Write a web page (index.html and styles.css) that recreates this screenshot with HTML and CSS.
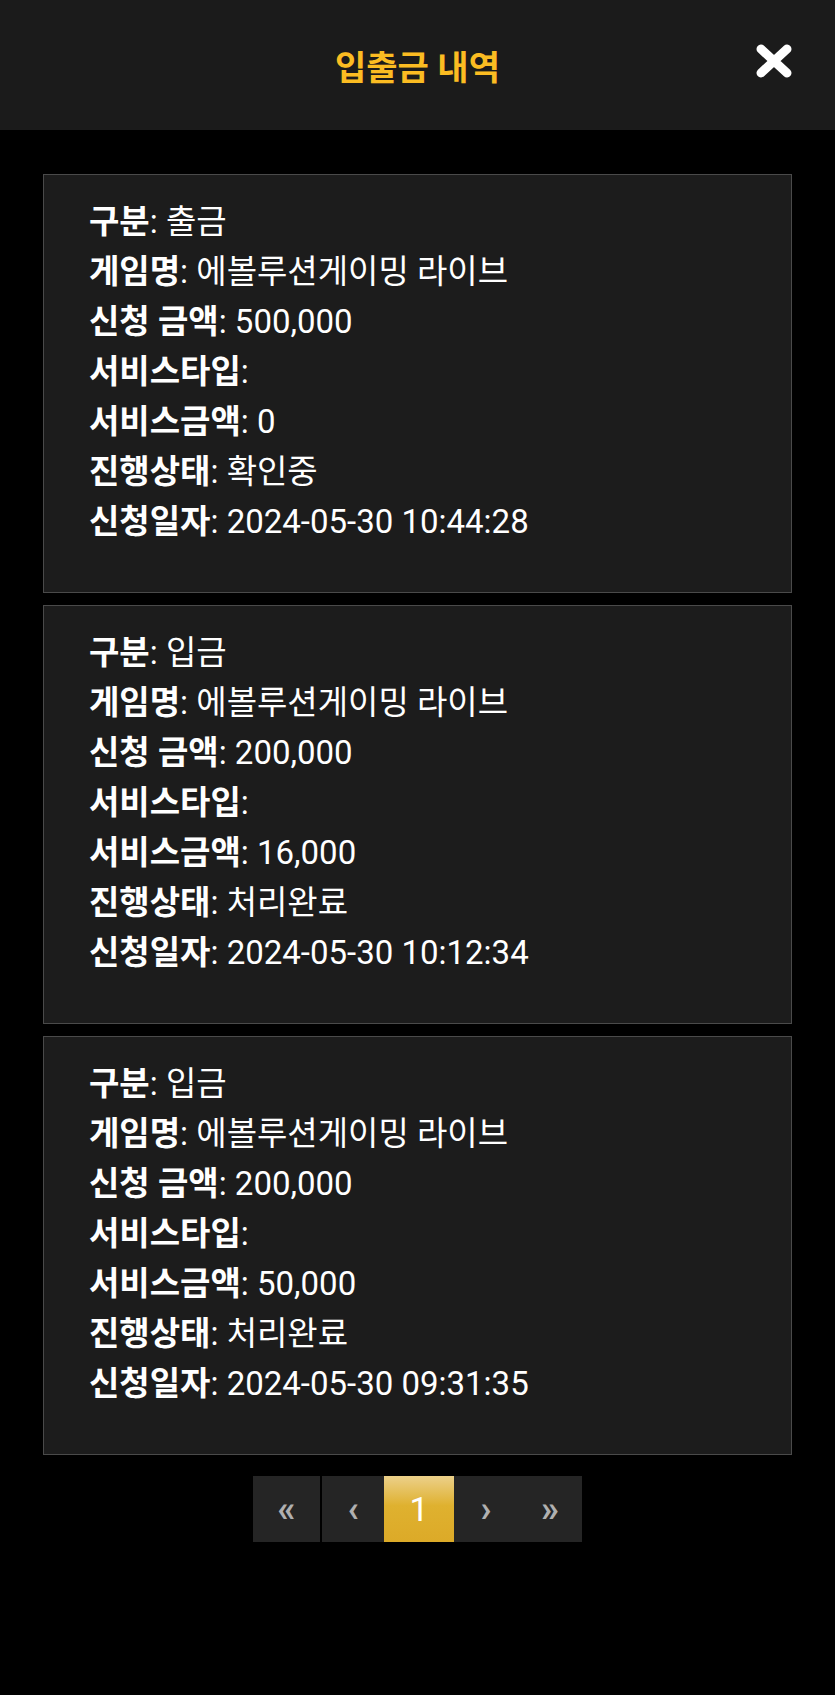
FILE: index.html
```html
<!DOCTYPE html>
<html lang="ko">
<head>
    <meta charset="UTF-8">
    <meta name="viewport" content="width=device-width, initial-scale=1.0">
    <title>입출금 내역</title>
    <link rel="stylesheet" href="styles.css">
</head>
<body>
    <div class="header">
        <h2 class="title">입출금 내역</h2>
        <a class="close" href="#">
            <svg width="38" height="36" viewBox="0 0 38 36">
                <path d="M6 6 L32 30 M32 6 L6 30" stroke="#fff" stroke-width="9" stroke-linecap="round" fill="none"/>
            </svg>
        </a>
    </div>

    <div class="container">
        <div class="card">
            <div class="row"><b>구분</b>: 출금</div>
            <div class="row"><b>게임명</b>: 에볼루션게이밍 라이브</div>
            <div class="row"><b>신청 금액</b>: 500,000</div>
            <div class="row"><b>서비스타입</b>: </div>
            <div class="row"><b>서비스금액</b>: 0</div>
            <div class="row"><b>진행상태</b>: 확인중</div>
            <div class="row"><b>신청일자</b>: 2024-05-30 10:44:28</div>
        </div>
        <div class="card">
            <div class="row"><b>구분</b>: 입금</div>
            <div class="row"><b>게임명</b>: 에볼루션게이밍 라이브</div>
            <div class="row"><b>신청 금액</b>: 200,000</div>
            <div class="row"><b>서비스타입</b>: </div>
            <div class="row"><b>서비스금액</b>: 16,000</div>
            <div class="row"><b>진행상태</b>: 처리완료</div>
            <div class="row"><b>신청일자</b>: 2024-05-30 10:12:34</div>
        </div>
        <div class="card">
            <div class="row"><b>구분</b>: 입금</div>
            <div class="row"><b>게임명</b>: 에볼루션게이밍 라이브</div>
            <div class="row"><b>신청 금액</b>: 200,000</div>
            <div class="row"><b>서비스타입</b>: </div>
            <div class="row"><b>서비스금액</b>: 50,000</div>
            <div class="row"><b>진행상태</b>: 처리완료</div>
            <div class="row"><b>신청일자</b>: 2024-05-30 09:31:35</div>
        </div>

        <div class="pagination">
            <a href="#" class="page first">&laquo;</a>
            <a href="#" class="page prev">&lsaquo;</a>
            <a href="#" class="page active">1</a>
            <a href="#" class="page next">&rsaquo;</a>
            <a href="#" class="page last">&raquo;</a>
        </div>
    </div>
</body>
</html>
```

FILE: styles.css
```css
body {
    margin: 0;
    background-color: #000;
    color: #fff;
    font-family: Roboto, "Noto Sans CJK KR", sans-serif;
}
.header {
    position: relative;
    height: 130px;
    background-color: #1b1b1b;
    display: flex;
    align-items: center;
    justify-content: center;
}
.title {
    margin: 0;
    font-size: 34px;
    font-weight: bold;
    color: #fbbc22;
}
.close {
    position: absolute;
    right: 42px;
    top: 43px;
    display: block;
    line-height: 0;
}
.container {
    padding: 44px 43px 100px;
}
.card {
    background-color: #1c1c1c;
    border: 1px solid #4a4a4a;
    padding: 22px 20px 45px 45px;
    margin-bottom: 12px;
}
.row {
    font-size: 33px;
    line-height: 50px;
}
.row b {
    font-weight: bold;
}
.pagination {
    display: flex;
    justify-content: center;
    margin-top: 21px;
}
.page {
    display: flex;
    align-items: center;
    justify-content: center;
    width: 64px;
    height: 66px;
    background-color: #252525;
    color: #b0b0b0;
    font-size: 36px;
    font-weight: bold;
    text-decoration: none;
}
.page.first {
    width: 67px;
    margin-right: 2px;
}
.page.prev {
    width: 62px;
}
.page.active {
    width: 70px;
    color: #fff;
    font-size: 34px;
    font-weight: normal;
    background: linear-gradient(#ecd08a, #dfb12f 45%, #dcaa28);
}
```
